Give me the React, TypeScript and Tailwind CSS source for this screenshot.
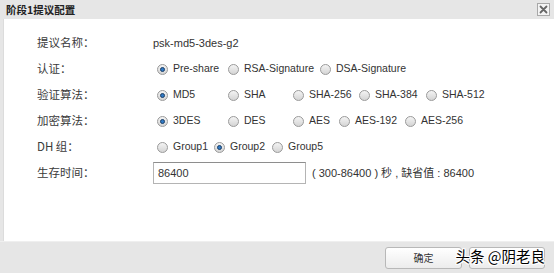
import React from "react";

type Item = { label: string; w?: number; checked?: boolean };

const latin = { fontFamily: '"Liberation Sans", Arial, "Noto Sans CJK SC", sans-serif' };
const cjk = { fontFamily: '"Noto Sans CJK SC", "Liberation Sans", sans-serif' };

function Radio({ checked }: { checked?: boolean }) {
  return (
    <span className="relative inline-flex h-[11px] w-[11px] shrink-0 items-center justify-center rounded-full border border-[#9a9a9a] bg-gradient-to-b from-[#f4f4f4] to-[#d4d4d4]">
      {checked && (
        <span className="h-[5px] w-[5px] rounded-full border border-[#1d3f66] bg-[#2f79c4]" />
      )}
    </span>
  );
}

function RadioRow({ items }: { items: Item[] }) {
  return (
    <div className="ml-[4px] flex items-center">
      {items.map((it) => (
        <span
          key={it.label}
          className="inline-flex items-center"
          style={it.w ? { width: it.w } : undefined}
        >
          <Radio checked={it.checked} />
          <span className="ml-[5px] text-[10.5px] text-[#333]" style={latin}>
            {it.label}
          </span>
        </span>
      ))}
    </div>
  );
}

function Row({ label, children }: { label: React.ReactNode; children: React.ReactNode }) {
  return (
    <div className="flex h-[26px] items-center">
      <div className="w-[116px] shrink-0 text-[11.5px] text-[#3a3a3a]" style={cjk}>
        {label}
      </div>
      <div className="flex items-center">{children}</div>
    </div>
  );
}

export default function App() {
  return (
    <div className="flex h-[273px] w-[554px] flex-col overflow-hidden bg-[#e6e6e6]">
      <div className="flex h-[19px] shrink-0 items-center justify-between pl-[6px] pr-[4px]">
        <span className="text-[10.5px] font-bold text-[#222]" style={cjk}>
          阶段1提议配置
        </span>
        <span className="flex h-[13px] w-[13px] items-center justify-center border border-[#a8a8a8] bg-[#f4f4f4]">
          <svg width="9" height="9" viewBox="0 0 9 9">
            <path d="M1.5 1.5 L7.5 7.5 M7.5 1.5 L1.5 7.5" stroke="#666" strokeWidth="1.8" strokeLinecap="round" />
          </svg>
        </span>
      </div>
      <div className="ml-[3px] flex-1 border-l border-[#dcdcdc] bg-white pl-[33px] pt-[11px]">
        <Row label="提议名称：">
          <span className="text-[11px] text-[#333]" style={latin}>
            psk-md5-3des-g2
          </span>
        </Row>
        <Row label="认证：">
          <RadioRow
            items={[
              { label: "Pre-share", w: 71, checked: true },
              { label: "RSA-Signature", w: 92 },
              { label: "DSA-Signature" },
            ]}
          />
        </Row>
        <Row label="验证算法：">
          <RadioRow
            items={[
              { label: "MD5", w: 71, checked: true },
              { label: "SHA", w: 65 },
              { label: "SHA-256", w: 66 },
              { label: "SHA-384", w: 67 },
              { label: "SHA-512" },
            ]}
          />
        </Row>
        <Row label="加密算法：">
          <RadioRow
            items={[
              { label: "3DES", w: 71, checked: true },
              { label: "DES", w: 65 },
              { label: "AES", w: 46 },
              { label: "AES-192", w: 66 },
              { label: "AES-256" },
            ]}
          />
        </Row>
        <Row label={<span>DH 组：</span>}>
          <RadioRow
            items={[
              { label: "Group1", w: 57 },
              { label: "Group2", w: 58, checked: true },
              { label: "Group5" },
            ]}
          />
        </Row>
        <Row label="生存时间：">
          <div className="flex h-[22px] w-[153px] items-center border border-[#b4b4b4] border-t-[#8e8e8e] pl-[4px] text-[11px] text-[#333]" style={latin}>
            86400
          </div>
          <span className="ml-[6px] text-[11px] text-[#333]" style={latin}>
            ( 300-86400 ) 秒 , 缺省值 : 86400
          </span>
        </Row>
      </div>
      <div className="relative flex h-[32px] shrink-0 items-center justify-end gap-[7px] border-t border-[#efefef] pr-[9px]">
        <button className="flex h-[22px] w-[77px] items-center justify-center rounded-[3px] border border-[#b8b8b8] bg-gradient-to-b from-[#ffffff] to-[#ececec] text-[10px] text-[#333]" style={cjk}>
          确定
        </button>
        <button className="h-[22px] w-[76px] rounded-[3px] border border-[#b8b8b8] bg-gradient-to-b from-[#ffffff] to-[#ececec]" />
        <span
          className="absolute right-[9px] top-[5px] text-[14.5px] leading-[18px] text-black"
          style={{
            ...cjk,
            textShadow:
              "1px 0 0 #fff, -1px 0 0 #fff, 0 1px 0 #fff, 0 -1px 0 #fff, 1px 1px 0 #fff, -1px -1px 0 #fff, 1px -1px 0 #fff, -1px 1px 0 #fff",
          }}
        >
          头条 @阴老良
        </span>
      </div>
    </div>
  );
}
